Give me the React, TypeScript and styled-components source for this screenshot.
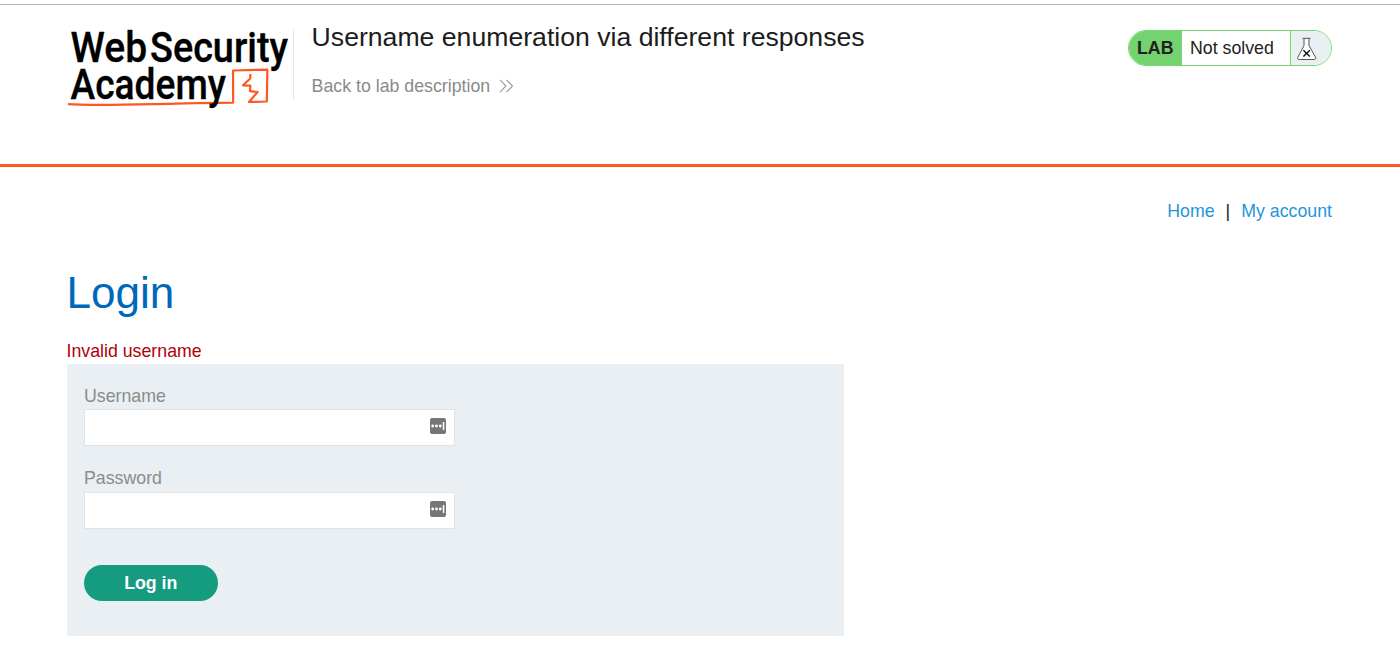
import React from "react";
import styled, { createGlobalStyle } from "styled-components";

const GlobalStyle = createGlobalStyle`
  * { box-sizing: border-box; }
  body {
    margin: 0;
    background: #fff;
    color: #222;
    font-family: "Liberation Sans", Arial, sans-serif;
    font-size: 17.75px;
    line-height: 20px;
  }
`;

const Page = styled.div`
  height: 646px;
  padding-top: 4px;
  overflow: hidden;
`;

const Header = styled.header`
  display: flex;
  align-items: flex-start;
  height: 162.5px;
  border-top: 1px solid #b9b9b9;
  border-bottom: 3px solid #ff5722;
  padding: 22px 68px 0 66px;
`;

const Logo = styled.svg`
  display: block;
  flex: none;
  width: 226px;
  height: 84px;
  overflow: visible;
`;

const TitleBlock = styled.div`
  flex: 1;
  margin: 3px 0 0 1px;
  height: 70px;
  padding-left: 17.6px;
  border-left: 1px solid #e4e6e8;
`;

const Title = styled.h2`
  margin: -8px 0 0;
  color: #1c1c1c;
  font-size: 26.63px;
  font-weight: 400;
  line-height: 30px;
  white-space: nowrap;
`;

const BackLink = styled.a`
  display: flex;
  align-items: center;
  gap: 9px;
  margin-top: 24.4px;
  color: #8a8a8a;
`;

const Status = styled.div`
  display: flex;
  width: 204px;
  height: 36px;
  margin-top: 3px;
  overflow: hidden;
  border: 1px solid #75d672;
  border-radius: 18px;
  line-height: 34px;
`;

const StatusTag = styled.span`
  width: 53px;
  padding-left: 8px;
  background: #72d36f;
  font-weight: 700;
`;

const StatusText = styled.span`
  flex: 1;
  padding-left: 8px;
  white-space: nowrap;
`;

const StatusIcon = styled.span`
  width: 41px;
  padding: 6px 0 0 6px;
  border-left: 1px solid #75d672;
  background: #eaeff2;
  svg { display: block; }
`;

const Main = styled.main`
  padding: 34.5px 68px 0 66.5px;
`;

const Nav = styled.nav`
  display: flex;
  justify-content: flex-end;
  gap: 11px;
`;

const NavLink = styled.a`
  color: #1f96db;
`;

const Heading = styled.h1`
  margin: 46px 0 0;
  color: #0068b9;
  font-size: 44.1px;
  font-weight: 400;
  line-height: 52px;
`;

const Warning = styled.p`
  margin: 22px 0 0;
  height: 23px;
  color: #b00008;
`;

const Form = styled.form`
  width: 777px;
  height: 272px;
  padding: 22px 17.5px;
  background: #e9eff2;
`;

const Field = styled.div`
  width: 371px;
  height: 82.6px;
`;

const Label = styled.label`
  display: block;
  margin-top: -0.4px;
  color: #8c8c8c;
`;

const InputBox = styled.div`
  display: flex;
  justify-content: flex-end;
  height: 37px;
  margin-top: 3.75px;
  padding: 8px 8px 0 0;
  border: 1px solid #e0e4e6;
  background: #fff;
`;

const Button = styled.button`
  display: block;
  width: 133.5px;
  height: 36.5px;
  margin-top: 14.2px;
  padding: 0;
  border: 0;
  border-radius: 19px;
  background: #159b80;
  color: #fff;
  font: 700 17.75px/37px "Liberation Sans", Arial, sans-serif;
`;

const Wordmark = styled.g`
  fill: #000;
  stroke: #000;
  stroke-width: 0.35px;
  font-family: Roboto, sans-serif;
  font-size: 42.2px;
  font-weight: 500;
`;

const AcademyLogo = () => (
  <Logo viewBox="66 27 226 84" role="img" aria-label="Web Security Academy">
    <g fill="none" stroke="#ff5722" strokeWidth="2.2" strokeLinejoin="round">
      <path d="M68 104.1 C90 105.8 130 104.6 165 103.8 S215 102.6 233.2 102.6 L233 70.5 L267.4 69.6 L266.8 101.5 L249 102 L257.6 92 L250 91.2 L250.3 85.6 L243 85.3 L250.2 78.5 L250.4 74" />
    </g>
    <Wordmark>
      <text x="70.6" y="62.3" textLength="76.5" lengthAdjust="spacingAndGlyphs">Web</text>
      <text x="150" y="62.3" textLength="138" lengthAdjust="spacingAndGlyphs">Security</text>
      <text x="70.6" y="98.5" textLength="155.4" lengthAdjust="spacingAndGlyphs">Academy</text>
    </Wordmark>
  </Logo>
);

const Chevrons = () => (
  <svg width="15" height="14" viewBox="0 0 15 14" fill="none" stroke="#999" strokeWidth="1.1">
    <path d="M1 .8 7 7 1 13.2M7.5 .8 13.5 7l-6 6.2" />
  </svg>
);

const Flask = () => (
  <svg width="20" height="24" viewBox="0 0 20 24" fill="none" stroke="#555" strokeWidth="1">
    <path d="M5.5 1.3h8M7 1.5v7L.9 20.3c-.6 1.3 0 2.2 1.3 2.2h15c1.3 0 1.9-.9 1.3-2.2L12 8.5v-7" fill="#fff" />
    <path d="m6.4 13.2 6.5 6.3m0-6.3-6.5 6.3" stroke="#111" strokeWidth="1.4" />
  </svg>
);

const FillIcon = () => (
  <svg width="16" height="16" viewBox="0 0 16 16">
    <rect width="16" height="16" rx="2" fill="#777" />
    <g fill="#fff">
      <circle cx="2.7" cy="8" r="1.4" />
      <circle cx="6.5" cy="8" r="1.4" />
      <circle cx="10.3" cy="8" r="1.4" />
      <rect x="12.8" y="4" width="1.5" height="8" />
    </g>
  </svg>
);

const TextField = ({ label }: { label: string }) => (
  <Field>
    <Label>{label}</Label>
    <InputBox><FillIcon /></InputBox>
  </Field>
);

export default function App() {
  return (
    <Page>
      <GlobalStyle />
      <Header>
        <AcademyLogo />
        <TitleBlock>
          <Title>Username enumeration via different responses</Title>
          <BackLink>Back to lab description <Chevrons /></BackLink>
        </TitleBlock>
        <Status>
          <StatusTag>LAB</StatusTag>
          <StatusText>Not solved</StatusText>
          <StatusIcon><Flask /></StatusIcon>
        </Status>
      </Header>
      <Main>
        <Nav>
          <NavLink>Home</NavLink>
          <span>|</span>
          <NavLink>My account</NavLink>
        </Nav>
        <Heading>Login</Heading>
        <Warning>Invalid username</Warning>
        <Form>
          <TextField label="Username" />
          <TextField label="Password" />
          <Button type="button">Log in</Button>
        </Form>
      </Main>
    </Page>
  );
}
